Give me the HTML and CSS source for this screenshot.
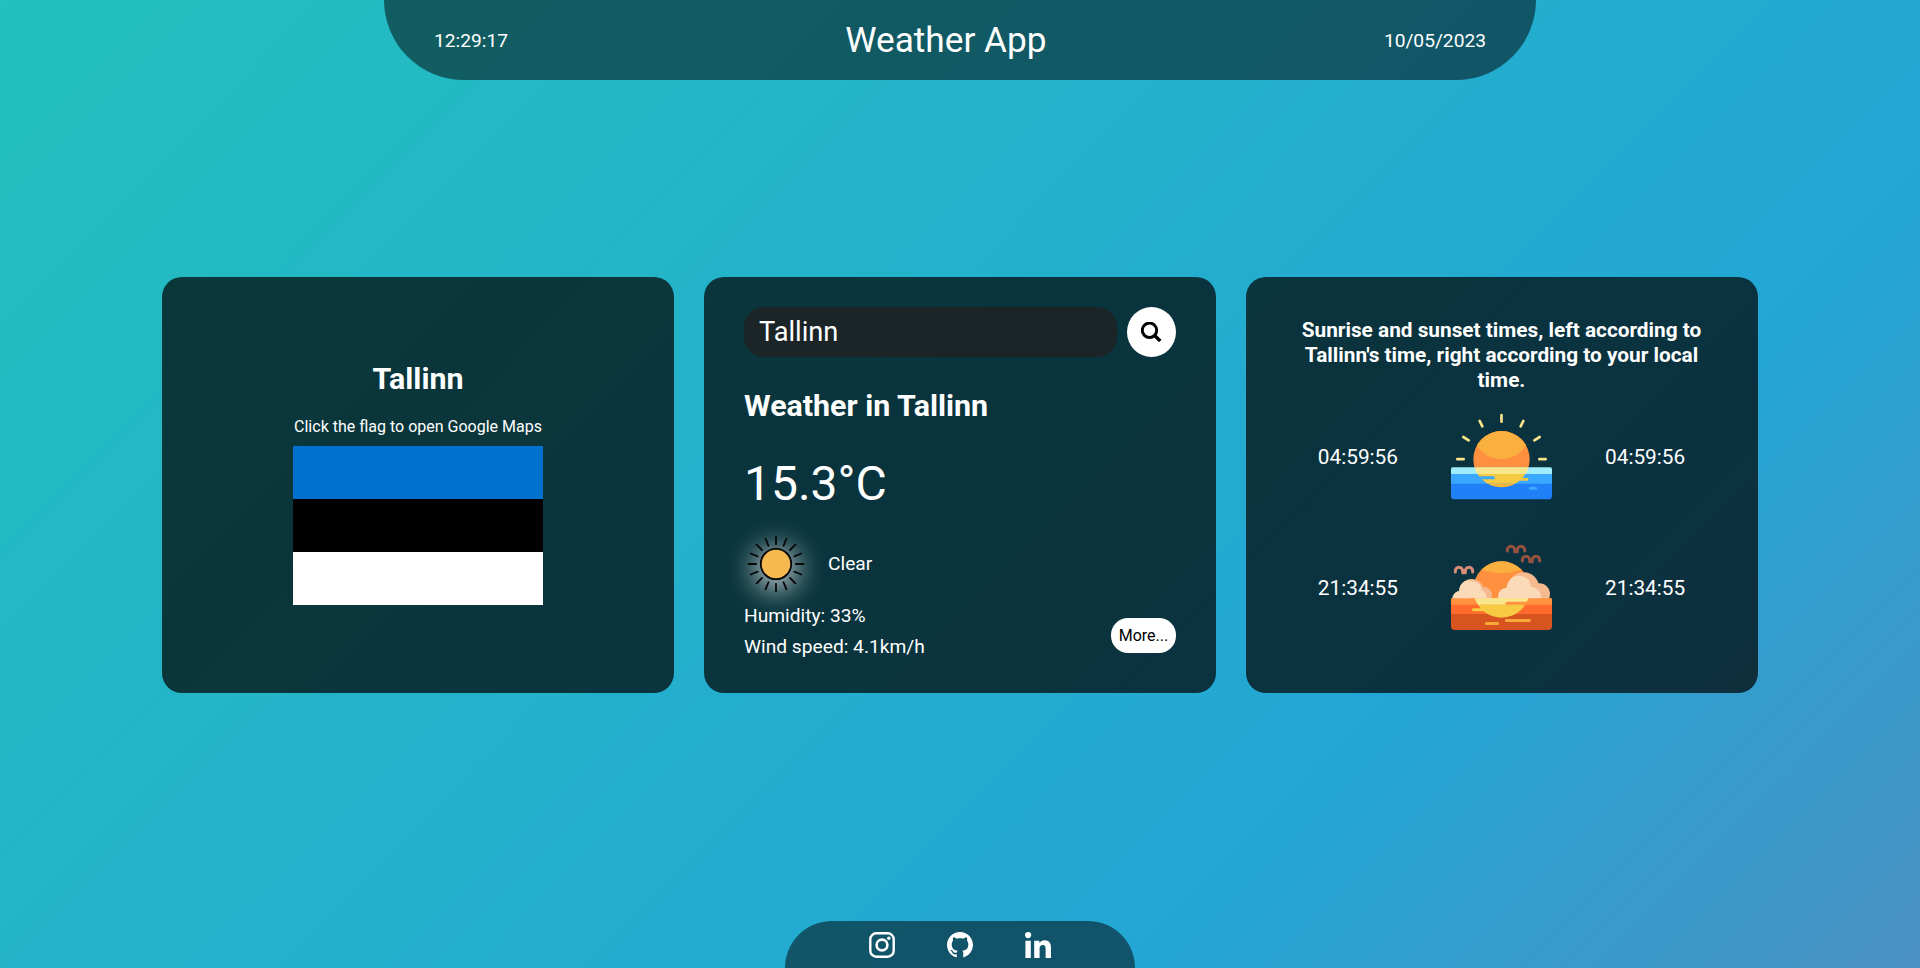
FILE: index.html
```html
<!DOCTYPE html>
<html lang="en">
<head>
<meta charset="utf-8">
<title>Weather App</title>
<link rel="stylesheet" href="styles.css">
</head>
<body>
<header class="header">
  <span class="header-info">12:29:17</span>
  <h1 class="title">Weather App</h1>
  <span class="header-info">10/05/2023</span>
</header>

<main class="cards">
  <section class="card location">
    <h2 class="city">Tallinn</h2>
    <p class="hint">Click the flag to open Google Maps</p>
    <a class="flag" href="#">
      <span class="stripe blue"></span>
      <span class="stripe black"></span>
      <span class="stripe white"></span>
    </a>
  </section>

  <section class="card weather">
    <div class="search">
      <input class="search-bar" type="text" value="Tallinn">
      <button class="search-button" aria-label="Search">
        <svg width="21" height="20" viewBox="0 0 21 20" fill="none" stroke="#000"><circle cx="8.5" cy="8.300" r="7.200" stroke-width="2.900"/><path d="M13.300 13.200L19.300 19" stroke-width="3.400"/></svg>
      </button>
    </div>
    <h2 class="weather-city">Weather in Tallinn</h2>
    <div class="temp">15.3°C</div>
    <div class="condition">
      <svg class="condition-icon" width="64" height="64" viewBox="-32 -32 64 64">
        <circle r="15.200" fill="#f6b950" stroke="#060808" stroke-width="1.800"/>
        <g stroke="#060808" stroke-width="1.800" stroke-linecap="round">
          <path d="M0-19.800V-27.400M0 19.800V27.400M-19.800 0H-27.400M19.800 0H27.400"/>
          <path transform="rotate(22.5)" d="M0-19.800V-27.400M0 19.800V27.400M-19.800 0H-27.400M19.800 0H27.400"/>
          <path transform="rotate(45)" d="M0-19.800V-27.400M0 19.800V27.400M-19.800 0H-27.400M19.800 0H27.400"/>
          <path transform="rotate(67.5)" d="M0-19.800V-27.400M0 19.800V27.400M-19.800 0H-27.400M19.800 0H27.400"/>
        </g>
      </svg>
      <span class="detail condition-name">Clear</span>
    </div>
    <div class="bottom-row">
      <div class="details">
        <div class="detail">Humidity: 33%</div>
        <div class="detail">Wind speed: 4.1km/h</div>
      </div>
      <button class="more">More...</button>
    </div>
  </section>

  <section class="card sun">
    <h3 class="sun-title">Sunrise and sunset times, left according to Tallinn's time, right according to your local time.</h3>
    <div class="sun-row">
      <span class="sun-time">04:59:56</span>
      <svg class="sun-icon" viewBox="63 21 303 303">
        <defs>
          <clipPath id="rise-disc"><circle cx="214.500" cy="177.500" r="84.500"/></clipPath>
        </defs>
        <g stroke="#f9e48a" stroke-width="8" stroke-linecap="round">
          <path d="M214.500 45V65M149 62.500L157 79M280 62.500L272 79M100 111L116 121M329 111L313 121M82 177.500H101M328 177.500H347"/>
        </g>
        <path d="M63 222V207q0-5 5-5H361q5 0 5 5V222z" fill="#9fecfd"/>
        <path d="M63 222H366V252H63z" fill="#3aa8ff"/>
        <path d="M63 251H366V287q0 11-11 11H74q-11 0-11-11z" fill="#2080f8"/>
        <g clip-path="url(#rise-disc)">
          <path d="M120 90H310V202H120z" fill="#ff9040"/>
          <circle cx="214.500" cy="93" r="84.500" fill="#fab03e"/>
          <path d="M120 202H310V222H120z" fill="#fae78b"/>
          <path d="M120 222H310V251H120z" fill="#f6ca43"/>
          <path d="M120 251H310V265H120z" fill="#f3b63b"/>
          <path d="M120 233H190" stroke="#3aa8ff" stroke-width="9" stroke-linecap="round"/>
        </g>
        <path d="M265 238H291" stroke="#f6ca43" stroke-width="8" stroke-linecap="round"/>
        <path d="M301 264.500H317" stroke="#3aa8ff" stroke-width="9" stroke-linecap="round"/>
      </svg>
      <span class="sun-time">04:59:56</span>
    </div>
    <div class="sun-row">
      <span class="sun-time">21:34:55</span>
      <svg class="sun-icon" viewBox="63 9 303 303">
        <defs>
          <clipPath id="set-disc"><circle cx="214.500" cy="163.500" r="84.500"/></clipPath>
          <clipPath id="horizon"><path d="M60 60H370V190H60z"/></clipPath>
        </defs>
        <g fill="none" stroke-width="9" stroke-linecap="round">
          <path d="M232 48V45a11 11 0 0 1 22 0q0 4 4 4q4 0 4-4a11 11 0 0 1 22 0v3M254 50H262" stroke="#95533f"/>
          <path d="M277 78V75a11 11 0 0 1 22 0q0 4 4 4q4 0 4-4a11 11 0 0 1 22 0v3M299 80H307" stroke="#95533f"/>
          <path d="M76 111V108a11 11 0 0 1 22 0q0 4 4 4q4 0 4-4a11 11 0 0 1 22 0v3M98 113H106" stroke="#d98c78"/>
        </g>
        <path d="M63 210V193q0-4 4-4H362q4 0 4 4V210z" fill="#ff913f"/>
        <path d="M63 209H366V238H63z" fill="#ff6a2d"/>
        <path d="M63 237H366V274q0 11-11 11H74q-11 0-11-11z" fill="#d75421"/>
        <g clip-path="url(#set-disc)">
          <path d="M120 70H310V189H120z" fill="#ff9040"/>
          <ellipse cx="214.500" cy="60" rx="100" ry="54" fill="#fab03e"/>
          <path d="M120 189H310V209H120z" fill="#fae78b"/>
          <path d="M120 209H310V250H120z" fill="#f6ca43"/>
        </g>
        <g clip-path="url(#horizon)">
          <g fill="#f5bb8f"><circle cx="125" cy="169" r="37"/><circle cx="160" cy="181" r="26"/><circle cx="281" cy="158" r="46"/><circle cx="328" cy="177" r="32"/></g>
          <g fill="#fbdab8"><circle cx="92" cy="192" r="25"/><path d="M87 172C87 142 108 132 128 138C149 144 155 155 155 165C166 169 169 180 169 190H87z"/><circle cx="230" cy="184" r="26"/><path d="M229 165C230 134 252 118 274 123C294 128 302 140 303 156C325 157 334 174 333 190H229z"/></g>
        </g>
        <path d="M231 205H292" stroke="#ff913f" stroke-width="9" stroke-linecap="round"/>
        <path d="M130 224H160" stroke="#f6ca43" stroke-width="9" stroke-linecap="round"/>
        <path d="M169 265.500H203M229 256.500H298" stroke="#f9a83b" stroke-width="9" stroke-linecap="round"/>
      </svg>
      <span class="sun-time">21:34:55</span>
    </div>
  </section>
</main>

<footer class="footer">
  <a class="social" href="#" aria-label="Instagram">
    <svg viewBox="0 0 26 26"><rect x="1.300" y="1.300" width="23.400" height="23.400" rx="6" fill="none" stroke="#fff" stroke-width="2.400"/><circle cx="13" cy="13" r="5.400" fill="none" stroke="#fff" stroke-width="2.600"/><circle cx="19.800" cy="6.200" r="1.700" fill="#fff"/></svg>
  </a>
  <a class="social" href="#" aria-label="GitHub">
    <svg viewBox="0 0 16 16"><path fill="#fff" d="M8 0C3.580 0 0 3.580 0 8c0 3.540 2.290 6.530 5.470 7.590.4.070.55-.17.55-.38 0-.19-.01-.82-.01-1.490-2.010.37-2.530-.49-2.690-.94-.09-.23-.48-.94-.82-1.130-.28-.15-.68-.52-.01-.53.63-.01 1.080.58 1.230.82.72 1.210 1.870.87 2.330.66.07-.52.28-.87.51-1.070-1.780-.2-3.640-.89-3.640-3.950 0-.87.31-1.590.82-2.150-.08-.2-.36-1.020.08-2.120 0 0 .67-.21 2.200.82.64-.18 1.320-.27 2-.27s1.360.09 2 .27c1.530-1.040 2.200-.82 2.200-.82.44 1.100.16 1.920.08 2.120.51.56.82 1.270.82 2.150 0 3.070-1.870 3.750-3.650 3.950.29.25.54.73.54 1.480 0 1.070-.01 1.930-.01 2.200 0 .21.15.46.55.38A8.010 8.010 0 0 0 16 8c0-4.420-3.580-8-8-8z"/></svg>
  </a>
  <a class="social" href="#" aria-label="LinkedIn">
    <svg viewBox="0 0 448 448"><path fill="#fff" d="M100.280 448H7.400V148.900h92.880zM53.790 108.100C24.090 108.100 0 83.500 0 53.800a53.790 53.790 0 0 1 107.580 0c0 29.700-24.100 54.300-53.790 54.300zM447.900 448h-92.680V302.400c0-34.700-.7-79.200-48.290-79.200-48.290 0-55.690 37.700-55.690 76.700V448h-92.780V148.900h89.080v40.800h1.300c12.400-23.500 42.690-48.300 87.880-48.300 94 0 111.280 61.900 111.280 142.300V448z"/></svg>
  </a>
</footer>
</body>
</html>
```
FILE: styles.css
```css
* {
  box-sizing: border-box;
}

body {
  margin: 0;
  height: 968px;
  display: flex;
  flex-direction: column;
  align-items: center;
  overflow: hidden;
  color: #fff;
  font-family: Roboto, sans-serif;
  background-image: linear-gradient(-45deg, #ee7752, #e73c7e, #23a6d5, #23d5ab);
  background-size: 400% 400%;
  background-position: 5% 50%;
}

h1, h2, h3, p {
  margin: 0;
}

button {
  border: none;
  padding: 0;
  color: #000;
  background: #fff;
  font-family: inherit;
}

.header {
  flex: none;
  width: 1152px;
  height: 80px;
  padding: 0 50px;
  display: flex;
  align-items: center;
  justify-content: space-between;
  border-radius: 0 0 80px 80px;
  background: rgba(0, 0, 0, 0.5);
}

.header-info {
  font-size: 19.2px;
}

.title {
  font-size: 35.2px;
  font-weight: 400;
}

.cards {
  margin-top: 197px;
  display: flex;
  gap: 30px;
}

.card {
  width: 512px;
  height: 416px;
  border-radius: 20px;
  background: rgba(0, 0, 0, 0.7);
}

.location {
  display: flex;
  flex-direction: column;
  align-items: center;
  padding-top: 84px;
}

.city,
.weather-city {
  font-size: 30.4px;
  line-height: 36px;
}

.hint {
  margin-top: 20px;
  font-size: 16px;
  line-height: 20px;
}

.flag {
  width: 250px;
  height: 159px;
  margin-top: 9px;
  display: flex;
  flex-direction: column;
}

.stripe {
  flex: 1;
}

.blue {
  background: #0072ce;
}

.black {
  background: #000;
}

.white {
  background: #fff;
}

.weather {
  padding: 30px 40px;
}

.search {
  display: flex;
  gap: 10px;
}

.search-bar {
  width: 373px;
  height: 50px;
  padding: 0 15px;
  border: none;
  outline: none;
  border-radius: 20px;
  color: #fff;
  background: #1b2527;
  font-family: inherit;
  font-size: 27.2px;
}

.search-button {
  width: 49px;
  height: 50px;
  display: flex;
  align-items: center;
  justify-content: center;
  border-radius: 50%;
}

.weather-city {
  margin-top: 31px;
}

.temp {
  margin-top: 32px;
  font-size: 48px;
  line-height: 56px;
}

.condition {
  margin-top: 20px;
  display: flex;
  align-items: center;
  gap: 20px;
}

.condition-icon {
  filter: drop-shadow(0 5px 12px rgba(255, 255, 255, 0.75)) drop-shadow(0 2px 16px rgba(255, 255, 255, 0.3));
}

.detail {
  font-size: 19.2px;
  line-height: 31px;
}

.condition-name {
  padding-bottom: 2px;
}

.bottom-row {
  margin-top: 4px;
  display: flex;
  justify-content: space-between;
}

.more {
  width: 65px;
  height: 35px;
  margin-top: 18px;
  border-radius: 17px;
  font-size: 16px;
}

.sun {
  padding: 41px 40px 40px 39px;
  text-align: center;
}

.sun-title {
  font-size: 20.8px;
  line-height: 25px;
}

.sun-row {
  height: 101px;
  margin-top: 14px;
  display: flex;
  align-items: center;
  justify-content: center;
  gap: 53px;
}

.sun-row + .sun-row {
  margin-top: 30px;
}

.sun-time {
  padding-bottom: 2px;
  font-size: 20.8px;
}

.sun-icon {
  width: 101px;
  height: 101px;
}

.footer {
  flex: none;
  width: 350px;
  height: 47px;
  margin-top: auto;
  padding-top: 10.5px;
  display: flex;
  justify-content: center;
  gap: 52px;
  border-radius: 50px 50px 0 0;
  background: rgba(0, 0, 0, 0.5);
}

.social {
  width: 26px;
  height: 26px;
}

.social svg {
  display: block;
  width: 26px;
  height: 26px;
}
```
